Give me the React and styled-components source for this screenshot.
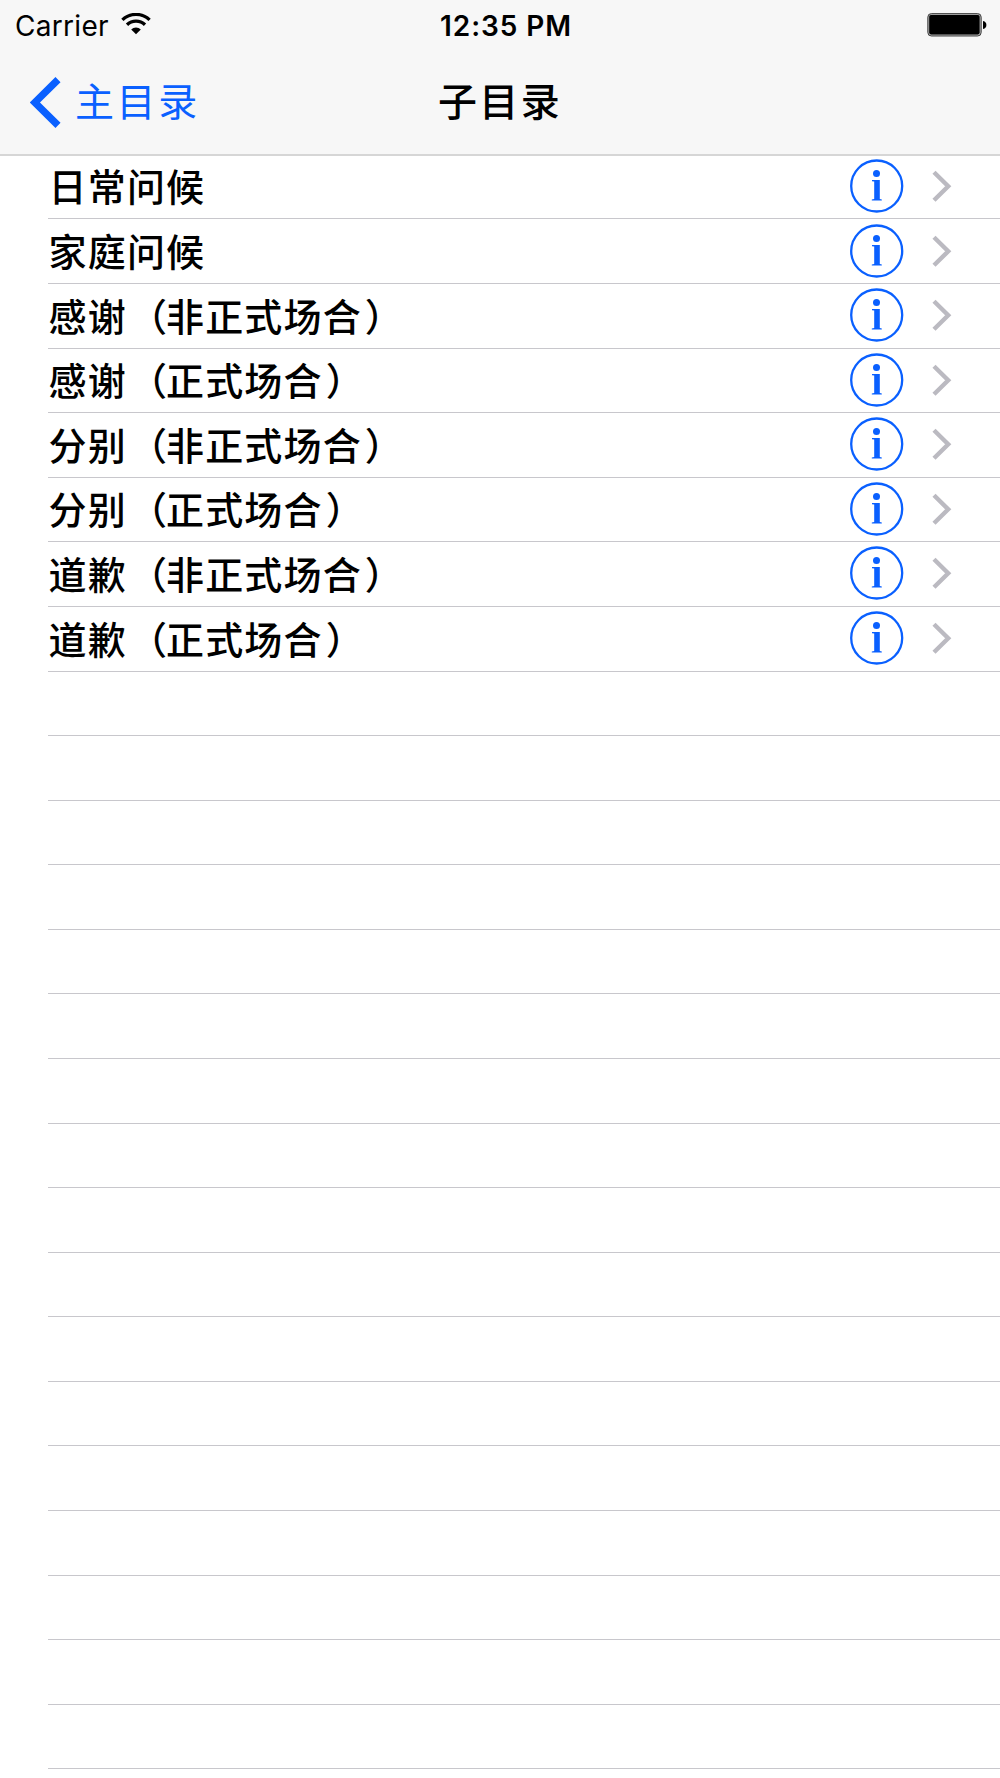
import React from 'react';
import styled, { createGlobalStyle } from 'styled-components';

const topics = [
  { name: '日常问候' },
  { name: '家庭问候' },
  { name: '感谢', note: '非正式场合' },
  { name: '感谢', note: '正式场合' },
  { name: '分别', note: '非正式场合' },
  { name: '分别', note: '正式场合' },
  { name: '道歉', note: '非正式场合' },
  { name: '道歉', note: '正式场合' },
];

// the table keeps drawing separators below the last topic
const emptyRows = Array.from({ length: 17 }, (_, i) => i);

function WifiIcon() {
  return (
    <svg width="30" height="22" viewBox="0 0 30 22" fill="none" stroke="#000">
      <path d="M1.4 6.9 A19.6 19.6 0 0 1 28.6 6.9" strokeWidth="3.3" />
      <path d="M6 11.7 A13 13 0 0 1 24 11.7" strokeWidth="3.3" />
      <path d="M10.2 16.4 A6.8 6.8 0 0 1 19.8 16.4 L15 21.2 Z" fill="#000" stroke="none" />
    </svg>
  );
}

function BatteryIcon() {
  return (
    <svg width="60" height="24" viewBox="0 0 60 24">
      <rect x="0.8" y="0.6" width="53.4" height="22.4" rx="3.6" fill="#a8a8a8" stroke="#444" strokeWidth="1" />
      <rect x="2.2" y="2" width="50.4" height="19.4" rx="1.8" fill="#000" />
      <path d="M56 8 C58.4 8.6 59.4 10 59.4 12 C59.4 14 58.4 15.4 56 16 Z" fill="#000" />
    </svg>
  );
}

function BackIcon() {
  return (
    <svg width="31" height="51" viewBox="0 0 31 51" fill="none" stroke="#0a60ff" strokeWidth="7.2">
      <path d="M28 2.6 L4.9 25.5 L28 48.4" />
    </svg>
  );
}

function InfoIcon() {
  return (
    <svg width="54" height="54" viewBox="0 0 54 54" fill="#0a60ff">
      <circle cx="26.7" cy="27" r="25.5" fill="none" stroke="#0a60ff" strokeWidth="2.3" />
      <circle cx="26.5" cy="14.6" r="3.5" />
      <path d="M22 20.9 H29.8 V40 L31.8 40.4 V41.5 H21.8 V40.4 L24.2 40 V22.6 L22 22.2 Z" />
    </svg>
  );
}

function ChevronIcon() {
  return (
    <svg width="20" height="32" viewBox="0 0 20 32" fill="none" stroke="#bbbac1" strokeWidth="4.4">
      <path d="M2 2.3 L16.2 16.3 L2 30.3" />
    </svg>
  );
}

function App() {
  return (
    <>
      <GlobalStyle />
      <Screen>
        <Header>
          <StatusBar>
            <Carrier>
              Carrier
              <WifiIcon />
            </Carrier>
            <Clock>12:35 PM</Clock>
            <BatteryIcon />
          </StatusBar>
          <NavBar>
            <BackButton>
              <BackIcon />
              <span>主目录</span>
            </BackButton>
            <Title>子目录</Title>
          </NavBar>
        </Header>

        <List>
          {topics.map(({ name, note }, i) => (
            <Row key={i}>
              <Label>
                {name}
                {note && (
                  <>
                    <Paren $shift={2}>（</Paren>
                    {note}
                    <Paren $shift={3}>）</Paren>
                  </>
                )}
              </Label>
              <InfoButton aria-label="info">
                <InfoIcon />
              </InfoButton>
              <ChevronIcon />
            </Row>
          ))}
          {emptyRows.map((i) => (
            <Row key={i} />
          ))}
        </List>
      </Screen>
    </>
  );
}

const GlobalStyle = createGlobalStyle`
  *, *::before, *::after {
    box-sizing: border-box;
  }

  body {
    margin: 0;
    background: #fff;
    font-family: Inter, 'Noto Sans CJK SC', sans-serif;
    color: #000;
  }

  svg {
    display: block;
    flex: none;
  }

  button {
    font: inherit;
    border: 0;
    padding: 0;
    background: none;
  }
`;

const Screen = styled.div`
  width: 1000px;
  height: 1778px;
  overflow: hidden;
`;

const Header = styled.header`
  height: 156px;
  margin-bottom: -1.13px;
  background: #f7f7f7;
  border-bottom: 2px solid #d6d6d6;
`;

const StatusBar = styled.div`
  display: grid;
  grid-template-columns: 1fr auto 1fr;
  align-items: center;
  height: 50px;
  padding: 0 13px 0 15px;
  font-size: 28px;

  > svg {
    justify-self: end;
  }
`;

const Carrier = styled.div`
  display: flex;
  align-items: center;
  gap: 12px;
  padding-top: 1px;
  letter-spacing: 0.3px;

  svg {
    margin-top: -4px;
  }
`;

const Clock = styled.div`
  padding: 1px 0 0 10px;
  font-weight: 600;
  letter-spacing: 0.9px;
`;

const NavBar = styled.nav`
  display: grid;
  grid-template-columns: 1fr auto 1fr;
  align-items: center;
  height: 104px;
  padding: 0 30px;
  font-size: 39px;
`;

const BackButton = styled.button`
  display: flex;
  align-items: center;
  gap: 14px;
  color: #0a60ff;
  letter-spacing: 2.6px;

  span {
    padding-bottom: 6px;
  }
`;

const Title = styled.h1`
  margin: 0;
  padding-bottom: 6px;
  font-size: 39px;
  font-weight: 500;
  letter-spacing: 2.4px;
`;

const List = styled.div`
  padding-left: 48px;
`;

const Row = styled.div`
  display: flex;
  align-items: center;
  height: 64.58px;
  padding: 0 48px 1.4px 0;
  border-bottom: 1px solid #c8c7cc;
`;

const Label = styled.div`
  flex: 1;
  padding: 3px 0 0 0.6px;
  font-size: 38px;
  line-height: 58px;
  font-weight: 500;
  letter-spacing: 1.15px;
`;

const Paren = styled.span`
  margin-left: ${(props) => props.$shift}px;
  margin-right: -${(props) => props.$shift}px;
`;

const InfoButton = styled.button`
  margin-right: 28px;
`;

export default App;
